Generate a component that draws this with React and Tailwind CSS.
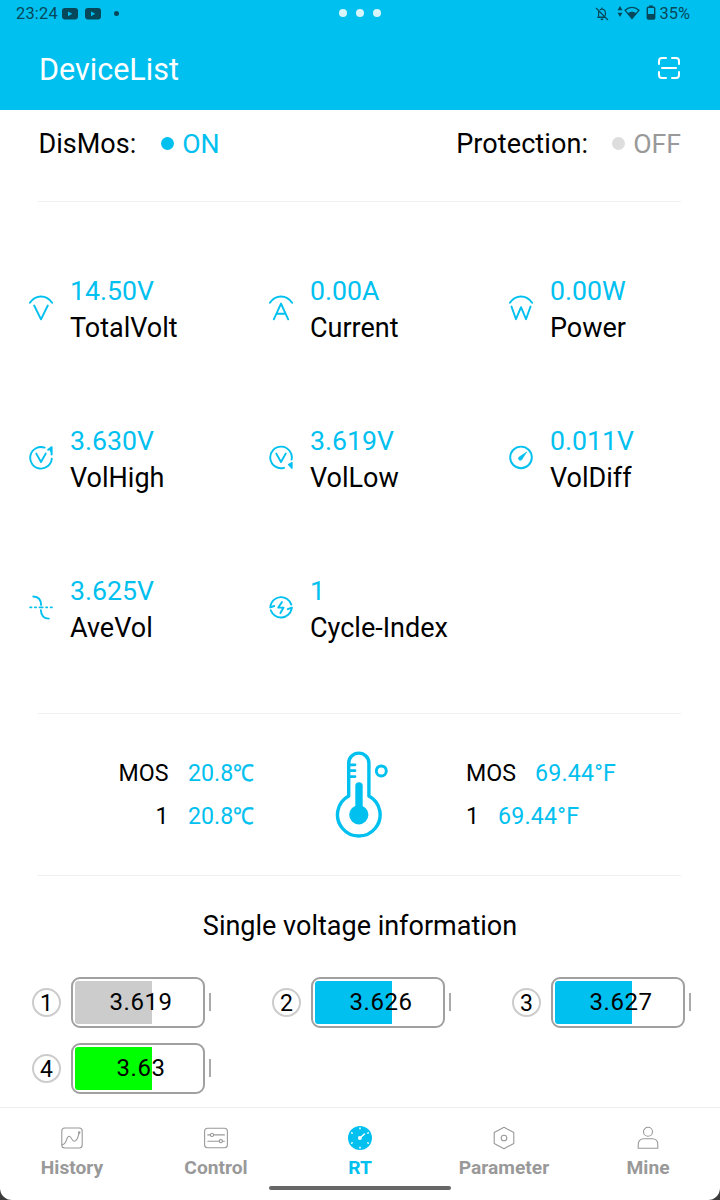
import React from 'react';

const cyan = '#00c0ef';

function Icon({ children, className = 'h-6 w-6', box = '0 0 24 24', stroke = 'currentColor', sw = 1.8 }) {
  return (
    <svg className={className} viewBox={box} fill="none" stroke={stroke} strokeWidth={sw} strokeLinecap="round" strokeLinejoin="round">
      {children}
    </svg>
  );
}

const arc = <path d="M0.9 7.8C6.5-.7 17.5-.7 23.1 7.8" />;

const icons = {
  volt: <>{arc}<path d="M5.2 10.5 12 24.3l6.8-13.8" /></>,
  amp: <>{arc}<path d="M4.8 24.3 12 8.6l7.2 15.7M7.6 18.8h8.8" /></>,
  watt: <>{arc}<path d="M2.5 11.6 7 24.2 12 12.2l5 12 4.5-12.6" /></>,
  high: (
    <>
      <path d="M22.8 13.7A10.8 10.8 0 1 1 15.6 2.6" />
      <path d="M7.3 8.6 12 17l4.7-8.4" />
      <path d="M19.200 4.800 22.600 2.200v7.400M21.800 4v2" strokeWidth="2" />
    </>
  ),
  low: (
    <>
      <path d="M15 22.8A10.8 10.8 0 1 1 22.6 14.6" />
      <path d="M7.3 8.6 12 17l4.7-8.4" />
      <path d="M19.5 19.6 23 17.5v5.8z" fill="currentColor" strokeWidth="1.3" />
    </>
  ),
  diff: (
    <>
      <circle cx="12" cy="12.4" r="10.8" />
      <path d="M17.5 7.1 10.6 11.7a1.9 1.9 0 1 0 2.5 2.5z" fill="currentColor" strokeWidth=".6" />
    </>
  ),
  average: (
    <>
      <path d="M4.3 1.5c5 .2 7.7 2.8 7.8 8.4M11.9 15.2c.2 5.2 3.300 8.300 8 8.400" />
      <path d="M1 12.400h1.600M5.800 12.400h1.400M10.400 12.400h3.400M17 12.400h1.400M21.600 12.400H23" strokeWidth="1.600" />
    </>
  ),
  cycle: (
    <>
      <path d="M1.4 11A10.8 10.8 0 0 1 22.3 9.6M22.6 13.8A10.8 10.8 0 0 1 1.8 15.3" />
      <path d="M1.3 12.4 5.2 11M22.8 12.6l-4 1.6" />
      <path d="m13 7-3.7 5.6h5.3L11.4 18" />
    </>
  ),
};

const metrics = [
  ['volt', '14.50V', 'TotalVolt'],
  ['amp', '0.00A', 'Current'],
  ['watt', '0.00W', 'Power'],
  ['high', '3.630V', 'VolHigh'],
  ['low', '3.619V', 'VolLow'],
  ['diff', '0.011V', 'VolDiff'],
  ['average', '3.625V', 'AveVol'],
  ['cycle', '1', 'Cycle-Index'],
];

const cells = [
  [1, '3.619', 'bg-[#cccccc]'],
  [2, '3.626', 'bg-[#00c0ef]'],
  [3, '3.627', 'bg-[#00c0ef]'],
  [4, '3.63', 'bg-[#00ff00]'],
];

function StatusBar() {
  const video = (
    <svg className="h-3 w-4" viewBox="0 0 16 12">
      <rect width="16" height="11.4" rx="2.8" fill="#06485a" />
      <path d="M6 3.4v4.8l4.2-2.4z" fill={cyan} />
    </svg>
  );
  return (
    <div className="relative flex h-[27px] items-center justify-between pr-[30px] pl-4 text-[16.400px] leading-[27px] text-[#06485a]">
      <div className="flex items-center">
        <span className="w-[46px] tracking-[0.200px]">23:24</span>
        {video}
        <span className="w-[7px]" />
        {video}
        <span className="ml-[13px] h-[5px] w-[5px] rounded-full bg-[#06485a]" />
      </div>
      <div className="absolute top-[9px] left-[339px] flex gap-[9px]">
        <span className="h-2 w-2 rounded-full bg-[#d8f5fc]" />
        <span className="h-2 w-2 rounded-full bg-[#d8f5fc]" />
        <span className="h-2 w-2 rounded-full bg-[#d8f5fc]" />
      </div>
      <div className="flex items-center">
        <svg className="mr-2 h-[14px] w-[14px]" viewBox="0 0 14 14" fill="none" stroke="#06485a" strokeWidth="1.2">
          <path d="M1 1l12 12M3.6 4.3v5.8h7M4.8 2.8c1.7-1.4 5.6-.8 5.6 2.8v3.2M2.2 10.4h8.6M7 .4v1.4" />
          <path d="M5.8 12.3h2.4" strokeWidth="1.6" />
        </svg>
        <svg className="mb-1 h-[11px] w-[6px]" viewBox="0 0 6 11" fill="#06485a"><path d="M3 0l2.5 4.2h-5zM3 11l2.5-4.2h-5z" /></svg>
        <svg className="mb-[2px] ml-[1px] h-[14px] w-4" viewBox="0 0 16 14">
          <path d="M1.1 4.3C5 .4 11 .4 14.9 4.3L8 12.6z" fill="none" stroke="#06485a" strokeWidth="1.3" />
          <path d="M3.8 7.3c2.5-2 5.9-2 8.4 0L8 12.8z" fill="#06485a" />
        </svg>
        <svg className="mr-1 mb-[2px] ml-[6px] h-[15px] w-[10px]" viewBox="0 0 10 15">
          <path d="M3.2.4h3.6v1.8H3.2z" fill="#06485a" />
          <rect x="1.3" y="2.3" width="7.4" height="11.8" rx="1" fill="none" stroke="#06485a" strokeWidth="1.4" />
          <path d="M1.3 9h7.4v5H1.3z" fill="#06485a" />
        </svg>
        <span>35%</span>
      </div>
    </div>
  );
}

function Thermometer() {
  return (
    <svg className="h-[110px] w-[90px]" viewBox="0 0 90 110" fill="none" stroke={cyan} strokeWidth="3.4" strokeLinecap="round">
      <path d="M28.7 56V23.2a10.1 10.1 0 0 1 20.2 0V56a21.3 21.3 0 1 1-20.2 0z" strokeLinejoin="round" />
      <path d="M30 24.8h5M30 30.7h5M30 36.6h5" strokeWidth="2.8" />
      <path d="M39 46v28" strokeWidth="7.4" />
      <circle cx="38.8" cy="74.8" r="9.6" fill={cyan} stroke="none" />
      <circle cx="61.3" cy="30.9" r="5" strokeWidth="3" />
    </svg>
  );
}

function Celsius({ value }) {
  return <span className="text-[#00c0ef]">{value}<span className="inline-block w-5 origin-left scale-x-[0.900] [-webkit-text-stroke:0.350px_#00c0ef]">℃</span></span>;
}

function Battery({ index, value, fill }) {
  return (
    <div className="flex h-[66px] w-60 items-start">
      <div className="mt-[11px] ml-8 flex h-[29px] w-[29px] items-center justify-center rounded-full border-2 border-[#cccccc] text-[23px] leading-none">
        <span className="mt-[2px]">{index}</span>
      </div>
      <div className="relative ml-[10px] flex h-[51px] w-[134px] items-center rounded-[9px] border-2 border-[#a0a0a0] p-[2px]">
        <div className={`h-[43px] w-[77px] rounded-l-[3px] ${fill}`} />
        <span className="absolute inset-0 pl-[6px] text-center text-[24px] leading-[47px] tracking-[0.500px]">{value}</span>
      </div>
      <div className="mt-4 ml-[4px] h-[18px] w-[2px] bg-[#aaaaaa]" />
    </div>
  );
}

const tabs = [
  ['History', <><rect x="1.8" y="2" width="20.4" height="20" rx="3" /><path d="M2.2 18.500c5 .3 3.600-8.200 6.900-8.200 2.800 0 2.400 5 5 5 3.300 0 4.200-5.200 5-8.200" /><circle cx="19.200" cy="6.400" r=".7" /></>],
  ['Control', <><rect x=".6" y="2.300" width="22.800" height="19.400" rx="3" /><path d="M3.800 8.900h2.600M9.600 8.900h10.800M3.800 15.200h11.400M18.400 15.200h2" /><circle cx="8" cy="8.900" r="1.600" /><circle cx="16.800" cy="15.200" r="1.600" /></>],
  ['RT', null],
  ['Parameter', <><path d="M12 1.200 21.800 6.600v10.800L12 22.800 2.200 17.400V6.600z" /><circle cx="12" cy="12" r="2.800" /></>],
  ['Mine', <><circle cx="12" cy="5.800" r="4.500" /><path d="M2.200 22.200v-3.500c0-3.700 2.100-6 5.500-6h8.600c3.400 0 5.500 2.300 5.500 6v3.500z" /></>],
];

function Gauge() {
  return (
    <svg className="h-6 w-6" viewBox="0 0 24 24">
      <circle cx="12" cy="12" r="12" fill={cyan} />
      <g fill="none" stroke="#fff" strokeLinecap="round">
        <path d="M12 2v.8M12 21.200v.8M3.700 6.900l.5.300M3.700 17.100l.5-.3M20.300 6.900l-.5.300M20.300 17.100l-.5-.3" strokeWidth="1.500" />
        <path d="M12.200 11.800 16.500 8" strokeWidth="1.500" />
      </g>
      <circle cx="11.900" cy="12.100" r="2" fill="#fff" />
    </svg>
  );
}

export default function App() {
  return (
    <div className="h-[1200px] w-[720px] overflow-hidden bg-[#3c3c3c] font-['Roboto',sans-serif] text-black">
      <div className="flex h-full flex-col overflow-hidden rounded-b-[12px] bg-white whitespace-nowrap">
        <header className="h-[110px] shrink-0 bg-[#00c0ef]">
          <StatusBar />
          <div className="flex h-[83px] items-center justify-between pt-[2px] pr-10 pl-[39px]">
            <h1 className="text-[30.500px]">
              <span className="text-white">DeviceList</span>
            </h1>
            <Icon className="mb-[3px] h-[22px] w-[22px]" box="0 0 22 22" stroke="#fff" sw={2}>
              <path d="M1 7V4a3 3 0 0 1 3-3h4M14 1h4a3 3 0 0 1 3 3v3M21 15v3a3 3 0 0 1-3 3h-4M8 21H4a3 3 0 0 1-3-3v-3M4 11h14" />
            </Icon>
          </div>
        </header>

        <section className="mr-[39px] ml-[38px] flex h-[92px] shrink-0 justify-between border-b border-[#f0f0f0] pt-4 text-[26.700px] leading-9">
          <div className="flex h-9 items-center pl-[0.500px]">
            <span className="text-[27px]">DisMos:</span>
            <span className="mr-2 mb-[2px] ml-[25px] h-[13px] w-[13px] rounded-full bg-[#00c0ef]" />
            <span className="text-[#00c0ef]">ON</span>
          </div>
          <div className="flex h-9 items-center">
            <span className="text-[27px] tracking-[0.100px]">Protection:</span>
            <span className="mr-2 mb-[2px] ml-6 h-[13px] w-[13px] rounded-full bg-[#dddddd]" />
            <span className="text-[#999999]">OFF</span>
          </div>
        </section>

        <section className="grid h-[511px] shrink-0 grid-cols-3 grid-rows-[150px_150px_150px] pt-8">
          {metrics.map(([icon, value, label]) => (
            <div key={label} className="flex items-center pl-[29px]">
              <div className="mr-[17px] mb-[2px] h-[26px] w-6 text-[#00c0ef]">
                <Icon className="h-[26px] w-6" box="0 0 24 26" sw={1.9}>{icons[icon]}</Icon>
              </div>
              <div className="text-[26.700px]">
                <div className="leading-[36px] text-[#00c0ef]">{value}</div>
                <div className="pt-[1px] text-[27px] leading-[36px]">{label}</div>
              </div>
            </div>
          ))}
        </section>

        <section className="mr-[39px] ml-[38px] flex h-[163px] shrink-0 border-y border-[#f0f0f0] text-[23.200px] leading-[43px]">
          <div className="grid w-[282px] grid-cols-[130.500px_auto] content-start gap-x-[19.500px] pt-[38px]">
            <span className="text-right">MOS</span>
            <Celsius value="20.8" />
            <span className="text-right">1</span>
            <Celsius value="20.8" />
          </div>
          <div className="w-[90px] pt-[26px]"><Thermometer /></div>
          <div className="ml-14 pt-[38px]">
            <div className="flex gap-[19px]"><span>MOS</span><span className="tracking-[0.200px] text-[#00c0ef]">69.44°F</span></div>
            <div className="flex gap-[19px]"><span>1</span><span className="tracking-[0.200px] text-[#00c0ef]">69.44°F</span></div>
          </div>
        </section>

        <section className="h-[231px] shrink-0">
          <h2 className="pt-8 text-center text-[27px] leading-9">Single voltage information</h2>
          <div className="mt-[33px] grid grid-cols-3">
            {cells.map(([index, value, fill]) => <Battery key={index} index={index} value={value} fill={fill} />)}
          </div>
        </section>

        <nav className="relative grid grow grid-cols-5 border-t border-[#eeeeee] text-[#999999]">
          {tabs.map(([name, drawing]) => (
            <div key={name} className={`flex flex-col items-center pt-[18px] text-[19.200px] leading-6 font-bold ${name === 'RT' ? 'text-[#00c0ef]' : ''}`}>
              {drawing ? <Icon sw={1.1}>{drawing}</Icon> : <Gauge />}
              <span className="mt-[6px]">{name}</span>
            </div>
          ))}
          <div className="absolute bottom-[10px] left-[269px] h-1 w-[182px] rounded-full bg-[#666666]" />
        </nav>
      </div>
    </div>
  );
}
